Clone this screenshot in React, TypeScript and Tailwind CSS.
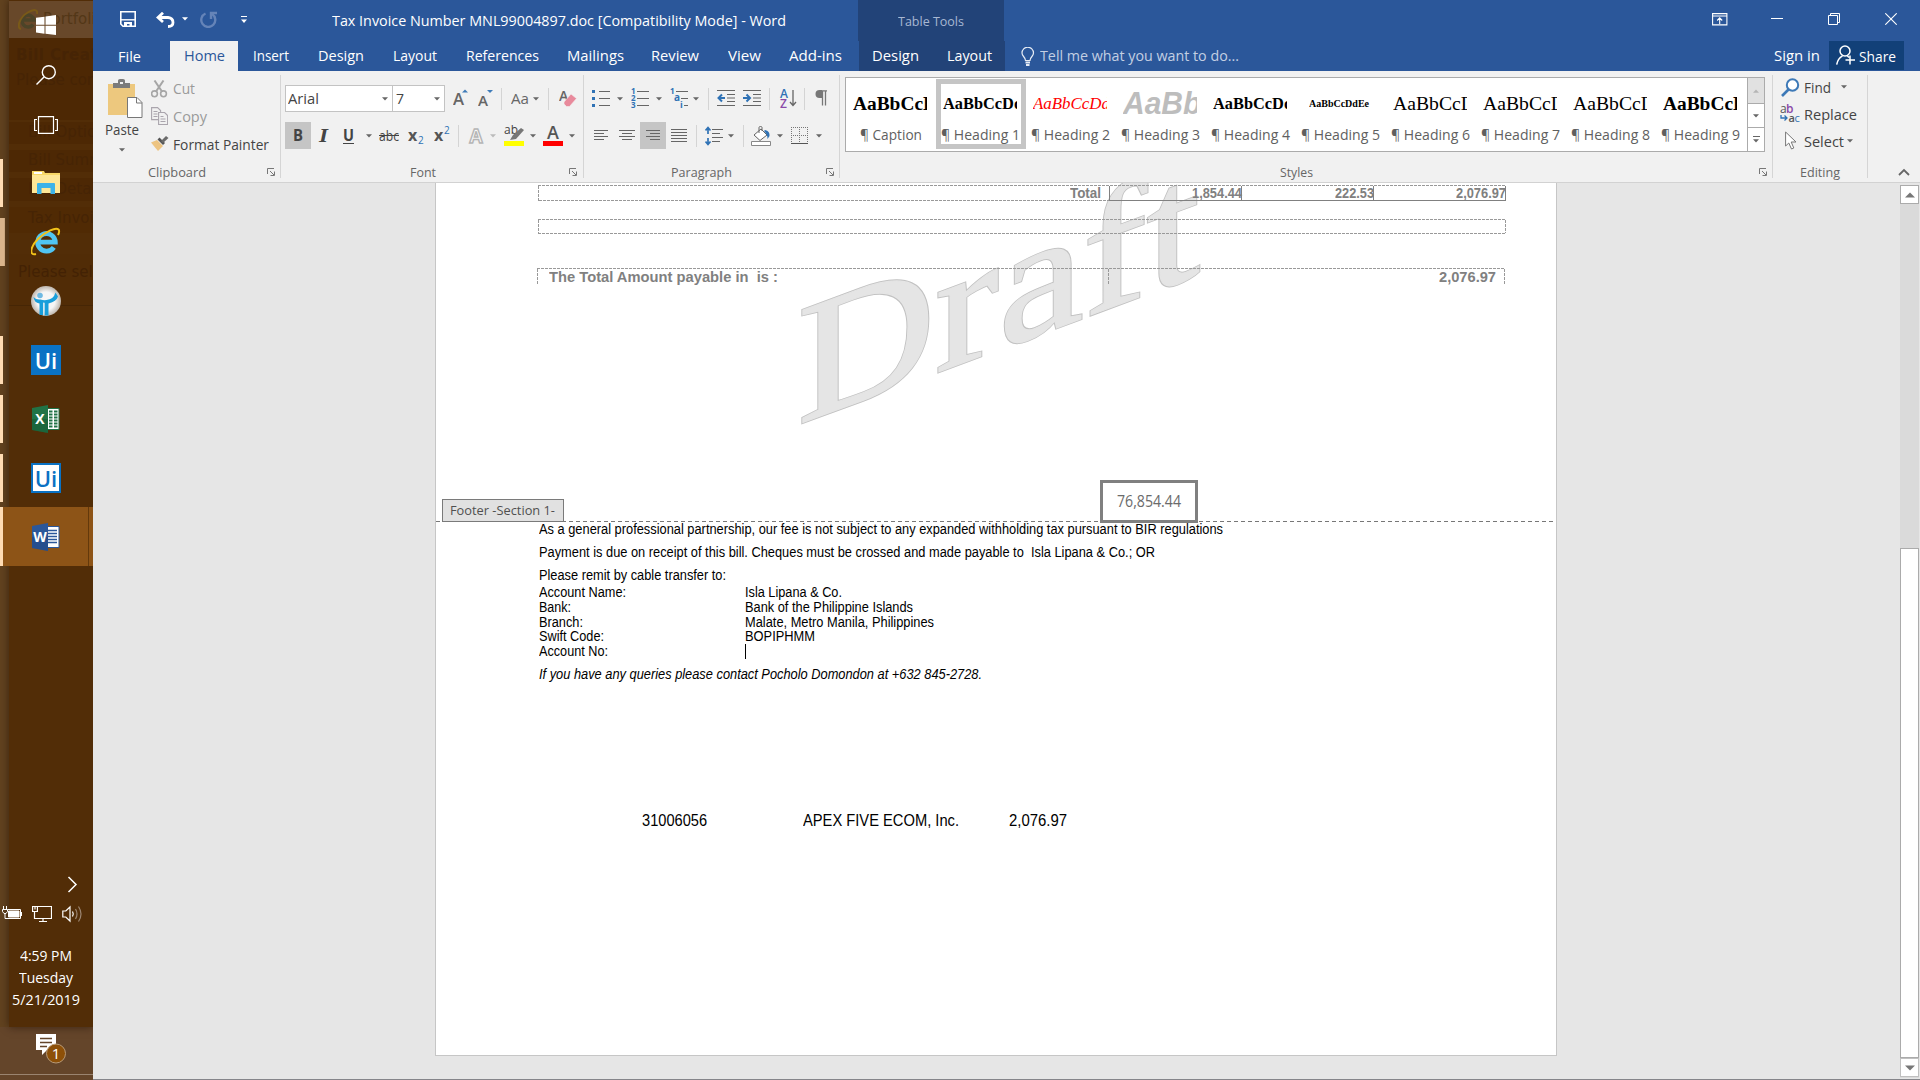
import { useLayoutEffect, useRef } from "react";
import type { ReactNode } from "react";

/* Text squeezed or stretched horizontally to an exact advance width. */
function Fit({ w, className = "", inner = "", children }: { w: number; className?: string; inner?: string; children: ReactNode }) {
  const ref = useRef<HTMLSpanElement>(null);
  useLayoutEffect(() => {
    const el = ref.current;
    if (!el) return;
    el.style.transform = "none";
    el.style.transform = `scaleX(${w / el.getBoundingClientRect().width})`;
  }, [w, children]);
  return (
    <span className={"block shrink-0 " + className} style={{ width: w }}>
      <span ref={ref} className={"inline-block origin-left whitespace-pre " + inner}>
        {children}
      </span>
    </span>
  );
}

const Caret = ({ className = "", color = "#666" }: { className?: string; color?: string }) => (
  <svg width="6" height="4" className={"shrink-0 " + className}>
    <path d="M0 .3h6L3 3.5z" fill={color} />
  </svg>
);

const Sep = ({ className = "" }: { className?: string }) => <div className={"h-[22px] w-px shrink-0 bg-[#d4d4d4] " + className} />;

const Launcher = ({ className = "" }: { className?: string }) => (
  <svg width="8" height="8" className={"shrink-0 " + className} fill="none" stroke="#777">
    <path d="M.5 6V.5H7M3 3l4 4M7.5 3.5v4h-4" />
  </svg>
);

/* ---------- Taskbar ---------- */

const Ui = ({ invert = false }: { invert?: boolean }) => (
  <div
    className={
      invert
        ? "flex h-[30px] w-[30px] items-center justify-center border-2 border-[#0a72c4] bg-white text-[#0a72c4]"
        : "flex h-[30px] w-[30px] items-center justify-center bg-[#0a72c4] text-white"
    }
  >
    <span className="text-[22px] leading-[28px] font-semibold">Ui</span>
  </div>
);

function OfficeIcon({ letter, color, dark }: { letter: string; color: string; dark: string }) {
  return (
    <svg width="28" height="28" viewBox="0 0 28 28">
      <path d="M15 3.5h12v21H15z" fill="#fff" stroke={color} />
      {letter === "X" ? (
        <path d="M17 6.500h3.500M22 6.500h3.500M17 9.500h3.500M22 9.500h3.500M17 12.500h3.500M22 12.500h3.500M17 15.500h3.500M22 15.500h3.500M17 18.500h3.500M22 18.500h3.500M17 21.500h3.500M22 21.500h3.500" stroke={color} strokeWidth="2" />
      ) : (
        <path d="M16 7.500h9M16 10.500h9M16 13.500h9M16 16.500h9M16 19.500h9" stroke={color} strokeWidth="1.500" />
      )}
      <path d="M0 3 16 0v28L0 25z" fill={color} />
      <path d="M0 14h16v14L0 25z" fill={dark} opacity=".3" />
      <text x="8" y="19" textAnchor="middle" fontSize="14" fontWeight="700" fill="#fff" fontFamily="Open Sans">
        {letter}
      </text>
    </svg>
  );
}

const Slot = ({ children, bar = true, active = false }: { children: ReactNode; bar?: boolean; active?: boolean }) => (
  <div className={active ? "relative flex h-[59px] items-center bg-[#8d5417]" : "relative flex h-[59px] items-center"}>
    <div className={active ? "h-full w-[3px] bg-[#ffdcb4]" : bar ? "h-12 w-[3px] bg-[#ffdcb4]" : "h-12 w-[3px]"} />
    <div className="ml-[28px] flex w-[30px] justify-center">{children}</div>
    {active && <div className="ml-[27px] h-full w-px bg-[#63390b]" />}
  </div>
);

/* Window showing dimly through the translucent taskbar. */
function Ghost() {
  return (
    <div className="absolute top-0 left-[9px] h-[1027px] w-[84px] overflow-hidden bg-[#522d07] font-['DejaVu_Sans',sans-serif] text-[15px] whitespace-nowrap text-[#462405] shadow-[0_0_8px_rgba(30,12,0,0.6)]">
      <div className="mt-px flex h-[37px] items-center bg-[#68482a] text-[#533717]">
        <svg width="20" height="22" className="ml-[9px] shrink-0" fill="none">
          <path d="M15 15.500A6 6 0 1 1 16 11H6" stroke="#4c4428" strokeWidth="3.500" />
          <path d="M3 20C-2 19 2 8 9 4s11-4 10 1" stroke="#7a5a18" strokeWidth="2" />
        </svg>
        <span className="ml-[5px]">Portfolio</span>
      </div>
      <div className="h-[82px] bg-[#4d2804] pl-[7px]">
        <div className="pt-[7px] leading-5 font-bold tracking-wide">Bill Creation</div>
        <div className="pt-[5px] leading-5">Please complete</div>
      </div>
      <div className="mt-[2px] h-[22px] bg-[#4d2804] pl-[19px] leading-[20px]">Bill Options</div>
      <div className="mt-[6px] h-[22px] bg-[#4d2804] pl-[19px] leading-[20px]">Bill Summary</div>
      <div className="mt-[6px] h-[23px] bg-[#4d2804] pl-[19px] leading-[22px]">Bill Details</div>
      <div className="mt-[6px] h-[26px] bg-[#502a04] pl-[19px] leading-[22px]">Tax Invoice</div>
      <div className="mt-[21px] h-[52px] border-b border-[#462605] bg-[#512c06] pl-[9px] leading-[36px] text-[#432204]">Please select</div>
    </div>
  );
}

function Taskbar() {
  return (
    <div className="relative h-full w-[93px] shrink-0 overflow-hidden bg-[#61421f]">
      <div className="absolute inset-x-0 bottom-0 h-[53px] bg-[#64452a]" />
      <Ghost />
      <div className="relative flex h-full flex-col text-white">
        <div className="flex h-[50px] pt-[15px] pl-9">
          <svg width="20" height="20" fill="#fff">
            <path d="M0 2.800 8.500 1.700v8H0zM9.500 1.500 20 0v9.700H9.500zM0 10.700h8.500v8L0 17.500zM9.500 10.700H20V20L9.500 18.700z" />
          </svg>
        </div>
        <div className="flex h-[50px] pt-[15px] pl-9">
          <svg width="20" height="20" fill="none" stroke="#fff" strokeWidth="1.400">
            <circle cx="12.800" cy="7.200" r="6.500" />
            <path d="M8 12 .5 19.500" />
          </svg>
        </div>
        <div className="flex h-[53px] pt-[16px] pl-[34px]">
          <svg width="24" height="18" fill="none" stroke="#fff" strokeWidth="1.200">
            <path d="M4.500.6h15v16.800h-15zM3 3.500H.6v11H3M21 3.500h2.400v11H21" />
          </svg>
        </div>
        <Slot>
          <svg width="28" height="23">
            <path d="M0 0h12l1 2h15v20H0z" fill="#f8d867" />
            <path d="M2 1h8v2H2z" fill="#fff" />
            <path d="M0 4h28v18H0z" fill="#fee797" />
            <path d="M5 23V13q0-1 1-1h16q1 0 1 1v10h-4.500v-6h-9v6z" fill="#3db3e8" />
          </svg>
        </Slot>
        <div className="relative">
          <div className="absolute top-[6px] left-0 flex h-12 w-[5px]">
            <div className="w-1 bg-[#d9b48c]" />
            <div className="w-px bg-[#c9a680]" />
          </div>
          <Slot bar={false}>
            <svg width="30" height="30" viewBox="0 0 30 30" fill="none">
              <path d="M22.800 20.300A8.800 8.800 0 1 1 24.300 15.200H8" stroke="#50c4f2" strokeWidth="4.800" />
              <path d="M5 27C-2 29-1 20 7 12 15 4 25 0 27.500 2.500 28.500 3.500 28 6 27 8" stroke="#f2c21a" strokeWidth="2" />
            </svg>
          </Slot>
        </div>
        <Slot bar={false}>
          <svg width="30" height="30" viewBox="0 0 30 30">
            <defs>
              <radialGradient id="ball">
                <stop offset=".6" stopColor="#f6f6f6" />
                <stop offset="1" stopColor="#bdb5ac" />
              </radialGradient>
            </defs>
            <circle cx="15" cy="15" r="15" fill="url(#ball)" />
            <path d="M2.500 11q2.500 3 7 2.500 3 1 6 .5 7-.5 9-7.500l2.500 4q-1.500 5-9.500 7v12h-4V17h-1v12h-4V17.500Q3 16.500 2.500 11z" fill="#1a9fdb" />
            <path d="M12.800 16.500v13" stroke="#f6f6f6" />
            <circle cx="9" cy="9.500" r="2.800" fill="#6fb9e2" />
          </svg>
        </Slot>
        <Slot>
          <Ui />
        </Slot>
        <Slot>
          <OfficeIcon letter="X" color="#217346" dark="#0c4a28" />
        </Slot>
        <Slot>
          <Ui invert />
        </Slot>
        <Slot active>
          <OfficeIcon letter="W" color="#2b579a" dark="#1b3d75" />
        </Slot>

        <div className="mt-auto flex h-[29px] pl-[67px]">
          <svg width="12" height="17" fill="none" stroke="#fff" strokeWidth="1.500">
            <path d="m1.500 1 7.500 7.500L1.500 16" />
          </svg>
        </div>
        <div className="flex h-[39px] items-start pl-[2px]">
          <svg width="20" height="16" className="shrink-0" fill="none" stroke="#fff">
            <path d="M5.500 4.500h13v9h-13M19.500 7v4M1.500 1v3M4.500 1v3M.5 4.500h5v2l-1.500 2h-2L.5 6.500zM3 8v5.500h3" />
            <path d="M6.500 6h10.500v6H6.500z" fill="#fff" />
          </svg>
          <svg width="20" height="18" className="ml-[10px] shrink-0" fill="none" stroke="#fff" strokeWidth="1.200">
            <path d="M6 1.500h13.500v12H2.500V7M.6 1.500h4.800v5H.6zM3 1.500v3M11 13.500v3M7 16.500h8" />
          </svg>
          <svg width="21" height="18" className="ml-[10px] shrink-0" fill="none" stroke="#fff" strokeWidth="1.200">
            <path d="M.8 6h3L8 2v14l-4.200-4h-3zM10.500 6.500q1.500 2.500 0 5" />
            <path d="M13.500 4q3 5 0 10M16.500 1.500q5 7.500 0 15" stroke="#9c8672" />
          </svg>
        </div>
        <div className="flex h-[90px] flex-col items-center pr-[1px] text-[15px] leading-[22px]">
          <Fit w={52}>4:59 PM</Fit>
          <Fit w={54}>Tuesday</Fit>
          <Fit w={68}>5/21/2019</Fit>
        </div>
        <div className="flex h-[46px] pl-9">
          <svg width="32" height="32">
            <path d="M0 0h20v16h-9l-5 5v-5H0z" fill="#fff" />
            <path d="M4 4.500h12M4 8.500h12M4 12.500h7" stroke="#64452a" strokeWidth="1.500" />
            <circle cx="20" cy="19.500" r="9.500" fill="#8d5008" stroke="#b89a77" />
            <text x="20" y="25" textAnchor="middle" fontSize="15" fill="#fff" fontFamily="Open Sans">
              1
            </text>
          </svg>
        </div>
      </div>
      <div className="absolute inset-x-0 bottom-[5px] h-px bg-[#9a8470]" />
    </div>
  );
}

/* ---------- Title bar and tabs ---------- */

function TitleBar() {
  return (
    <div className="flex h-[41px] items-start text-[15px] leading-5 text-white">
      <svg width="16" height="16" className="mt-[11px] ml-[27px] shrink-0" fill="none" stroke="#fff" strokeWidth="1.600">
        <path d="M.8.8h14.400v14.400H3L.8 13z" />
        <path d="M1 8.800h14" strokeWidth="1.400" />
        <path d="M4 11h8v4.500H9.500V13H7v2.500H4z" fill="#fff" strokeWidth="0" />
      </svg>
      <svg width="19" height="16" className="mt-[12px] ml-[20px] shrink-0" fill="none" stroke="#fff" strokeWidth="2.800">
        <path d="M2 5.500h10q5 .5 5 5 0 4-5 4" />
        <path d="M7 .8 2 5.500 7 10" />
      </svg>
      <Caret className="mt-[17px] ml-[7px]" color="#fff" />
      <svg width="18" height="17" className="mt-[11px] ml-[12px] shrink-0" fill="none" stroke="#6584b8" strokeWidth="2.400">
        <path d="M5.500 2.500A7 7 0 1 0 12 3" />
        <path d="M17 2h-6v6" />
      </svg>
      <svg width="6" height="8" className="mt-[16px] ml-[23px] shrink-0">
        <path d="M0 .5h6" stroke="#fff" />
        <path d="M0 3.500h6L3 7z" fill="#fff" />
      </svg>
      <Fit w={454} className="mt-[10px] ml-[85px]">
        Tax Invoice Number MNL99004897.doc [Compatibility Mode] - Word
      </Fit>
      <div className="ml-[72px] flex h-[41px] w-[146px] bg-[#224378]">
        <Fit w={66} className="mt-[11px] ml-[40px] text-[13.500px] text-[#a8b8d3]">
          Table Tools
        </Fit>
      </div>
      <svg width="16" height="13" className="mt-[13px] ml-auto shrink-0" fill="none" stroke="#fff" strokeWidth="1.100">
        <path d="M.6.6h14.300v11.300H.6zM1 3h14M7.700 11V5M5.200 7.500l2.500-2.600 2.500 2.600" />
      </svg>
      <svg width="12" height="12" className="mt-[13px] ml-[43px] shrink-0" stroke="#fff">
        <path d="M0 5.500h12" />
      </svg>
      <svg width="12" height="12" className="mt-[13px] ml-[45px] shrink-0" fill="none" stroke="#fff">
        <path d="M.5 2.500h9v9h-9zM2.500 2V.5h9v9H10" />
      </svg>
      <svg width="12" height="12" className="mt-[13px] mr-[23px] ml-[45px] shrink-0" stroke="#fff" strokeWidth="1.100">
        <path d="m.3.300 11.400 11.400M11.700.3.300 11.700" />
      </svg>
    </div>
  );
}

function Tabs() {
  return (
    <div className="flex h-[30px] items-start text-[15px] leading-5 text-white">
      <Fit w={23} className="mt-[5px] ml-[25px]">File</Fit>
      <div className="ml-[29px] flex h-[30px] w-[68px] justify-center bg-[#f1f1f1] text-[#2b579a]">
        <Fit w={41} className="mt-[4px]">Home</Fit>
      </div>
      <Fit w={36} className="mt-[4px] ml-[15px]">Insert</Fit>
      <Fit w={46} className="mt-[4px] ml-[29px]">Design</Fit>
      <Fit w={44} className="mt-[4px] ml-[29px]">Layout</Fit>
      <Fit w={73} className="mt-[4px] ml-[29px]">References</Fit>
      <Fit w={57} className="mt-[4px] ml-[28px]">Mailings</Fit>
      <Fit w={48} className="mt-[4px] ml-[27px]">Review</Fit>
      <Fit w={33} className="mt-[4px] ml-[29px]">View</Fit>
      <Fit w={53} className="mt-[4px] ml-[28px]">Add-ins</Fit>
      <div className="ml-[17px] flex h-[30px] w-[146px] bg-[#224378]">
        <Fit w={47} className="mt-[4px] ml-[13px]">Design</Fit>
        <Fit w={45} className="mt-[4px] ml-[28px]">Layout</Fit>
      </div>
      <svg width="14" height="20" className="mt-[6px] ml-[16px] shrink-0" fill="none" stroke="#e6ecf5" strokeWidth="1.200">
        <path d="M4.500 13.500C4.500 10 1 9.500 1 6a5.600 5.600 0 0 1 11.500 0c0 3.500-3.500 4-3.500 7.500z" />
        <path d="M4.500 15.500H9M5 18h3.500" strokeWidth="2" />
      </svg>
      <Fit w={199} className="mt-[4px] ml-[5px] text-[#c3cfe3]">Tell me what you want to do...</Fit>
      <Fit w={46} className="mt-[4px] ml-auto">Sign in</Fit>
      <div className="mr-4 ml-[9px] flex h-[29px] w-[75px] bg-[#124078]">
        <svg width="20" height="21" className="mt-[4px] ml-[7px] shrink-0" fill="none" stroke="#fff" strokeWidth="1.500">
          <circle cx="9" cy="6" r="5" />
          <path d="M.7 19.500C1.500 15 3.500 12.500 6.500 10.800M11 10.500l2 2M14 10.500v9M9.500 15h9.500" />
        </svg>
        <Fit w={37} className="mt-[5px] ml-[3px]">Share</Fit>
      </div>
    </div>
  );
}

/* ---------- Ribbon groups ---------- */

const Group = ({ className, children }: { className: string; children: ReactNode }) => (
  <div className={"relative flex h-full shrink-0 flex-col " + className}>
    {children}
    <div className="absolute top-1 right-0 h-[103px] w-px bg-[#d5d5d5]" />
  </div>
);

function Clipboard() {
  return (
    <Group className="w-[188px]">
      <div className="flex h-[91px]">
        <div className="ml-[12px] w-[38px]">
          <svg width="36" height="39" className="mt-[8px] ml-[3px]">
            <path d="M0 5h27v31H0z" fill="#edc87e" />
            <path d="M5 4h5V1.500Q10 0 12 0h3q2 0 2 1.500V4h5v5H5z" fill="#7b7b7b" />
            <path d="M12 3h3v2h-3z" fill="#f1f1f1" />
            <path d="M19.500 18.500h9.500l5 5v15H19.500z" fill="#fff" stroke="#777" />
            <path d="M28.500 18.500v5.500H34" fill="none" stroke="#777" />
          </svg>
          <Fit w={34} className="mt-[2px] text-[15px] leading-[18px] text-[#444]">Paste</Fit>
          <Caret className="mt-[10px] ml-[14px]" />
        </div>
        <div className="ml-[8px] pt-[7px] text-[15px] leading-[20px] text-[#9a9a9a]">
          <div className="flex h-[28px]">
            <svg width="17" height="18" className="mt-[2px]" fill="none" stroke="#a6a6a6" strokeWidth="1.600">
              <circle cx="3.500" cy="13.800" r="2.900" />
              <circle cx="12.500" cy="13.800" r="2.900" />
              <path d="m3.500.5 7.500 11M12.500.5 5 11.500" strokeWidth="2" />
            </svg>
            <Fit w={22} className="ml-[5px]">Cut</Fit>
          </div>
          <div className="flex h-[28px]">
            <svg width="17" height="18" className="mt-[1px]" fill="#f1f1f1" stroke="#aaa5ad" strokeWidth="1.100">
              <path d="M.6.6h6l3 3v9h-9z" />
              <path d="M7.600 5.500h6l3 3v9h-9z" />
              <path d="M2.500 4.500h4M2.500 7h4M2.500 9.500h4M9.500 9.500h3M9.500 12h5M9.500 14.500h5" />
            </svg>
            <Fit w={34} className="ml-[5px]">Copy</Fit>
          </div>
          <div className="flex h-[28px] text-[#444]">
            <svg width="18" height="16" className="mt-[1px]">
              <path d="M0 7.500 6 5l6 6-5 5z" fill="#edc481" />
              <path d="m6.500 4.500 2-2L14 8l-2 2z" fill="#555" />
              <path d="m10 6 5-5 2.500 2L12 8z" fill="#6b6b6b" />
            </svg>
            <Fit w={96} className="ml-[4px]">Format Painter</Fit>
          </div>
        </div>
      </div>
      <div className="flex items-center text-[13.500px] leading-5 text-[#666]">
        <Fit w={58} className="ml-[55px]">Clipboard</Fit>
        <Launcher className="ml-[61px]" />
      </div>
    </Group>
  );
}

function GrowA({ up }: { up: boolean }) {
  return (
    <svg width="15" height="20" className={up ? "ml-[8px] shrink-0" : "ml-[10px] shrink-0"}>
      <text x="0" y={up ? 16 : 17} fontSize={up ? 16 : 15} fontWeight="600" fill="#666" fontFamily="Open Sans" textLength={up ? 11 : 10} lengthAdjust="spacingAndGlyphs">
        A
      </text>
      <path d={up ? "M9 3.500h6l-3-3z" : "M9 1h6l-3 3z"} fill="#3f7cb9" />
    </svg>
  );
}

function FontGroup() {
  return (
    <Group className="w-[303px]">
      <div className="mt-[14px] flex h-[27px] items-center text-[15px] leading-5 text-[#444]">
        <div className="ml-[4px] flex h-[27px] w-[108px] shrink-0 items-center border border-[#c3c3c3] bg-white">
          <Fit w={31} className="mb-px ml-[2px]">Arial</Fit>
          <Caret className="ml-[63px]" />
        </div>
        <div className="-ml-px flex h-[27px] w-[53px] shrink-0 items-center border border-[#c3c3c3] bg-white">
          <Fit w={8} className="mb-px ml-[3px]">7</Fit>
          <Caret className="ml-[30px]" />
        </div>
        <GrowA up />
        <GrowA up={false} />
        <Sep className="ml-[8px]" />
        <Fit w={18} className="mb-[2px] ml-[9px] text-[#666]">Aa</Fit>
        <Caret className="ml-[4px]" />
        <Sep className="ml-[9px]" />
        <svg width="18" height="20" className="ml-[10px] shrink-0">
          <text x="0" y="11.500" fontSize="14" fontWeight="600" fill="#666" fontFamily="Open Sans">A</text>
          <path d="m5 13 7-8 5.500 4.500-7 8H7.500L5 15z" fill="#e88a9c" stroke="#f1f1f1" strokeWidth=".6" />
        </svg>
      </div>
      <div className="mt-[10px] flex h-[27px] items-center text-[#444]">
        <div className="ml-[4px] flex h-[27px] w-[26px] shrink-0 items-center justify-center bg-[#c5c5c5]">
          <Fit w={10} className="mb-px text-[16.500px] leading-5 font-bold">B</Fit>
        </div>
        <Fit w={9} className="ml-[8px] font-['Liberation_Serif',serif] text-[19px] leading-5 font-bold italic">I</Fit>
        <Fit w={11} className="mb-px ml-[15px] text-[16px] leading-5 font-bold" inner="underline underline-offset-2">U</Fit>
        <Caret className="ml-[12px]" />
        <Fit w={20} className="ml-[7px] text-[14px] leading-5" inner="line-through">abc</Fit>
        <svg width="16" height="22" className="ml-[9px] shrink-0" fontFamily="Open Sans" fill="#555">
          <text x="0" y="16" fontSize="16" fontWeight="700">x</text>
          <text x="10" y="19" fontSize="10" fill="#2f72b5">2</text>
        </svg>
        <svg width="16" height="22" className="ml-[10px] shrink-0" fontFamily="Open Sans" fill="#555">
          <text x="0" y="16" fontSize="16" fontWeight="700">x</text>
          <text x="10" y="9" fontSize="10" fill="#2f72b5">2</text>
        </svg>
        <Sep className="ml-[8px]" />
        <svg width="16" height="22" className="ml-[9px] shrink-0" fontFamily="Open Sans">
          <text x="1.500" y="17.500" fontSize="19" fontWeight="700" fill="#f8f8f8" stroke="#b5b5b5" strokeWidth="1.400">A</text>
        </svg>
        <Caret className="ml-[6px]" color="#bbb" />
        <svg width="21" height="22" className="ml-[8px] shrink-0">
          <text x="0" y="9" fontSize="13" fill="#444" fontFamily="Open Sans" textLength="14" lengthAdjust="spacingAndGlyphs">ab</text>
          <path d="m6 15 3-5 8-7 3 2-8 9z" fill="#777" />
          <path d="M0 16h20v5H0z" fill="#ff0" />
        </svg>
        <Caret className="ml-[5px]" />
        <svg width="20" height="22" className="ml-[7px] shrink-0">
          <text x="4" y="14" fontSize="18" fontWeight="600" fill="#555" fontFamily="Open Sans">A</text>
          <path d="M0 16h20v5H0z" fill="red" />
        </svg>
        <Caret className="ml-[6px]" />
      </div>
      <div className="mt-[13px] flex items-center text-[13.500px] leading-5 text-[#666]">
        <Fit w={26} className="ml-[129px]">Font</Fit>
        <Launcher className="ml-[133px]" />
      </div>
    </Group>
  );
}

const Lines = ({ d, w, className = "" }: { d: string; w: number; className?: string }) => (
  <svg width={w} height="18" className={"shrink-0 " + className} stroke="#666" strokeWidth="1.100">
    <path d={d} />
  </svg>
);

function ParagraphGroup() {
  return (
    <Group className="w-[256px]">
      <div className="mt-[14px] flex h-[27px] items-center">
        <svg width="18" height="18" className="mb-px ml-[8px] shrink-0">
          <path d="M7 2.500h11M7 9.500h11M7 16.500h11" stroke="#666" />
          <path d="M0 1h3v3H0zM0 8h3v3H0zM0 15h3v3H0z" fill="#2f72b5" />
        </svg>
        <Caret className="ml-[7px]" />
        <svg width="18" height="20" className="mb-[2px] ml-[8px] shrink-0" fill="#2f72b5" fontSize="8" fontFamily="Open Sans" fontWeight="700">
          <path d="M6 3.500h12M6 10.500h12M6 17.500h12" stroke="#666" />
          <text x="0" y="6">1</text>
          <text x="0" y="13">2</text>
          <text x="0" y="20">3</text>
        </svg>
        <Caret className="ml-[7px]" />
        <svg width="19" height="20" className="mb-[2px] ml-[8px] shrink-0" fill="#2f72b5" fontSize="8" fontFamily="Open Sans" fontWeight="700">
          <path d="M6 3.500h12M11 10.500h7M14 17.500h4" stroke="#666" />
          <text x="0" y="6">1</text>
          <text x="4" y="13" fontSize="10">a</text>
          <text x="10" y="20" fontSize="9">i</text>
        </svg>
        <Caret className="ml-[4px]" />
        <Sep className="ml-[9px]" />
        <svg width="18" height="18" className="mb-px ml-[8px] shrink-0" fill="none">
          <path d="M0 1.500h18M10 5.500h8M10 9h8M10 12.500h8M0 16.500h18" stroke="#666" />
          <path d="M8 9H2M5 5.500 1.500 9 5 12.500" stroke="#2f72b5" strokeWidth="2" />
        </svg>
        <svg width="18" height="18" className="mb-px ml-[8px] shrink-0" fill="none">
          <path d="M0 1.500h18M10 5.500h8M10 9h8M10 12.500h8M0 16.500h18" stroke="#666" />
          <path d="M0 9h6M3.500 5.500 7 9l-3.500 3.500" stroke="#2f72b5" strokeWidth="2" />
        </svg>
        <Sep className="ml-[8px]" />
        <svg width="18" height="22" className="mb-px ml-[9px] shrink-0" fontFamily="Open Sans" fontWeight="600" fontSize="12">
          <text x="1" y="11" fill="#2f72b5">A</text>
          <text x="1" y="20.500" fill="#8a4aa8">Z</text>
          <path d="M14 3v15M11 15l3 3.500 3-3.500" fill="none" stroke="#666" strokeWidth="1.300" />
        </svg>
        <Sep className="ml-[7px]" />
        <svg width="13" height="16" className="mb-px ml-[10px] shrink-0" fill="none" stroke="#777" strokeWidth="1.300">
          <path d="M12 .8H6M7.500 1v14.500M10.500 1v14.500" />
          <path d="M7 0v8H4.500a4 4 0 0 1 0-8z" fill="#777" strokeWidth="0" />
        </svg>
      </div>
      <div className="mt-[10px] flex h-[27px] items-center">
        <Lines w={14} className="ml-[10px]" d="M0 3.500h14M0 6.500h10M0 9.500h14M0 12.500h10" />
        <Lines w={16} className="ml-[11px]" d="M0 3.500h16M3 6.500h10M0 9.500h16M3 12.500h10" />
        <div className="ml-[5px] flex h-[27px] w-[26px] shrink-0 items-center justify-center bg-[#c5c5c5]">
          <Lines w={14} d="M0 3.500h14M4 6.500h10M0 9.500h14M4 12.500h10" />
        </div>
        <Lines w={16} className="ml-[5px]" d="M0 2.500h16M0 5.500h16M0 8.500h16M0 11.500h16M0 14.500h16" />
        <Sep className="ml-[9px]" />
        <svg width="18" height="20" className="ml-[8px] shrink-0" fill="none">
          <path d="M7 3.500h11M7 7.500h8M7 11.500h11M7 15.500h8" stroke="#666" />
          <path d="M3 2v6M3 12v6M.5 4.500 3 1.500l2.500 3M.5 15.500l2.500 3 2.500-3" stroke="#2f72b5" strokeWidth="1.700" />
        </svg>
        <Caret className="ml-[5px]" />
        <Sep className="ml-[9px]" />
        <svg width="20" height="20" className="ml-[7px] shrink-0" fill="none" stroke="#666">
          <path d="m3 9 7-6 6 6-7 5.500z" fill="#fff" />
          <path d="M8 7V1.500Q8 .5 9.500.5T11 1.500V5" />
          <path d="M14 4q5 1 4.500 6l-2 3q0-5-3.500-8z" fill="#2f72b5" strokeWidth="0" />
          <path d="M.5 15.500h19v4H.5z" fill="#fff" stroke="#888" />
        </svg>
        <Caret className="ml-[6px]" />
        <svg width="17" height="17" className="ml-[8px] shrink-0" fill="none" stroke="#777">
          <path d="M.5 0v16M16.500 0v16M8.500 0v16M0 .5h17M0 8.500h17" strokeDasharray="1 1" />
          <path d="M0 16.500h17" stroke="#555" />
        </svg>
        <Caret className="ml-[8px]" />
      </div>
      <div className="mt-[13px] flex items-center text-[13.500px] leading-5 text-[#666]">
        <Fit w={61} className="ml-[87px]">Paragraph</Fit>
        <Launcher className="ml-[94px]" />
      </div>
    </Group>
  );
}

const styleItems = [
  { name: "Caption", w: 62, cls: "font-['Liberation_Serif',serif] text-[18px] font-bold text-black", text: "AaBbCcD", tw: 84 },
  { name: "Heading 1", w: 79, cls: "font-['Liberation_Serif',serif] text-[16.500px] font-bold text-black", text: "AaBbCcDd", tw: 80 },
  { name: "Heading 2", w: 79, cls: "font-['Liberation_Serif',serif] text-[17px] italic text-[#ff0000]", text: "AaBbCcDd", tw: 77 },
  { name: "Heading 3", w: 79, cls: "font-['Liberation_Sans',sans-serif] text-[31px] font-bold italic text-[#bdbdbd]", text: "AaBbC", tw: 100 },
  { name: "Heading 4", w: 79, cls: "font-['Liberation_Serif',serif] text-[16.500px] font-bold text-black", text: "AaBbCcDd", tw: 80 },
  { name: "Heading 5", w: 79, cls: "font-['Liberation_Serif',serif] text-[10.500px] font-bold text-black", text: "AaBbCcDdEe", tw: 60 },
  { name: "Heading 6", w: 79, cls: "font-['Liberation_Serif',serif] text-[19.500px] text-black", text: "AaBbCcD", tw: 82 },
  { name: "Heading 7", w: 79, cls: "font-['Liberation_Serif',serif] text-[19.500px] text-black", text: "AaBbCcD", tw: 82 },
  { name: "Heading 8", w: 79, cls: "font-['Liberation_Serif',serif] text-[19.500px] text-black", text: "AaBbCcD", tw: 82 },
  { name: "Heading 9", w: 79, cls: "font-['Liberation_Serif',serif] text-[18px] font-bold text-black", text: "AaBbCcD", tw: 84 },
];

function StylesGroup() {
  return (
    <Group className="w-[933px]">
      <div className="mt-[6px] ml-[5px] flex h-[75px] w-[920px] border border-[#ababab] bg-white">
        {styleItems.map((s, i) => (
          <div key={s.name} className="relative flex h-[73px] w-[90px] shrink-0 flex-col items-center">
            {i === 1 && <div className="absolute inset-x-0 top-px h-[70px] border-[5px] border-[#c5c5c5]" />}
            <div className={i === 5 ? "relative mt-[13px] mr-[2px] flex h-[26px] w-[62px] items-center overflow-hidden" : "relative mt-[13px] mr-[2px] flex h-[26px] w-[74px] items-center overflow-hidden"}>
              <Fit w={s.tw} className={"leading-[26px] " + s.cls}>{s.text}</Fit>
            </div>
            <div className="mt-[8px] mr-px flex justify-center text-[14.500px] leading-5 text-[#5f5f5f]">
              <Fit w={s.w}>{"¶ " + s.name}</Fit>
            </div>
          </div>
        ))}
        <div className="ml-auto flex w-[17px] flex-col border-l border-[#ababab]">
          <div className="flex h-[25px] items-center justify-center bg-[#e1e1e1]">
            <Caret className="rotate-180" color="#b5b5b5" />
          </div>
          <div className="flex h-[24px] items-center justify-center border-t border-[#ababab]">
            <Caret />
          </div>
          <div className="flex h-[24px] flex-col items-center justify-center gap-[2px] border-t border-[#ababab]">
            <div className="h-px w-[7px] bg-[#666]" />
            <Caret />
          </div>
        </div>
      </div>
      <div className="mt-[10px] flex items-center text-[13.500px] leading-5 text-[#666]">
        <Fit w={33} className="ml-[440px]">Styles</Fit>
        <Launcher className="ml-[446px]" />
      </div>
    </Group>
  );
}

function EditingGroup() {
  return (
    <Group className="w-[95px]">
      <div className="h-[91px] pt-[6px] pl-[7px] text-[15px] leading-5 text-[#444]">
        <div className="flex h-[27px]">
          <svg width="19" height="19" className="mt-px ml-[1px]" fill="none" stroke="#3d79b7">
            <circle cx="11.500" cy="7" r="5.700" strokeWidth="2" fill="#fff" />
            <path d="m7.500 11.500-6.500 6.500" strokeWidth="2.600" />
          </svg>
          <Fit w={27} className="ml-[4px]">Find</Fit>
          <Caret className="mt-[8px] ml-[10px]" />
        </div>
        <div className="flex h-[27px]">
          <svg width="20" height="20" fontFamily="Open Sans" fontSize="12">
            <text x="0" y="9" fill="#555">a</text>
            <text x="6" y="9" fill="#8a4aa8" fontWeight="600">b</text>
            <text x="8.500" y="18" fill="#555" fontWeight="600" fontSize="11">a</text>
            <text x="14.500" y="18" fill="#2f72b5" fontSize="11">c</text>
            <path d="M1 11v3h5.500M4.500 11.500l2.500 2.500-2.500 2.500" fill="none" stroke="#2f72b5" strokeWidth="1.300" />
          </svg>
          <Fit w={53} className="ml-[4px]">Replace</Fit>
        </div>
        <div className="flex h-[27px]">
          <svg width="12" height="20" className="ml-[5px]" fill="#fff" stroke="#777">
            <path d="M.6 1v14l3.200-3 2.700 6 2.300-1-2.600-6H11z" />
          </svg>
          <Fit w={40} className="ml-[7px]">Select</Fit>
          <Caret className="mt-[8px] ml-[3px]" />
        </div>
      </div>
      <Fit w={40} className="ml-[27px] text-[13.500px] leading-5 text-[#666]">Editing</Fit>
    </Group>
  );
}

/* ---------- Document ---------- */

const DashH = () => <div className="h-px w-full bg-[repeating-linear-gradient(90deg,#999_0_3px,transparent_3px_4px)]" />;
const DashV = ({ className = "" }: { className?: string }) => (
  <div className={"w-px shrink-0 bg-[repeating-linear-gradient(180deg,#999_0_3px,transparent_3px_4px)] " + className} />
);

const Cell = ({ w, text }: { w: number; text: string }) => (
  <div className="flex h-[15px] w-[132px] justify-end border-r border-b border-[#808080]">
    <Fit w={w} className="-mr-px">{text}</Fit>
  </div>
);

function Page() {
  return (
    <div className="relative ml-[342px] h-[873px] w-[1122px] overflow-hidden border-x border-b border-[#c6c6c6] bg-white font-['Liberation_Sans',sans-serif]">
      <svg width="1120" height="340" className="absolute top-0 left-0">
        <g transform="matrix(1.112 -0.415 0 1 361.500 241.500)" fontFamily="Liberation Serif" fontSize="171.500" style={{ fontVariantLigatures: "none" }}>
          <text fill="#c2c2c2" stroke="#c2c2c2" strokeWidth="3">
            Draft
          </text>
          <text fill="#e5e5e5" stroke="#e5e5e5" strokeWidth="1.200" aria-hidden="true">
            Draft
          </text>
        </g>
      </svg>

      <div className="relative mt-[2px] ml-[102px] w-[968px] text-[14px] leading-[14px] font-bold text-[#808080]">
        <DashH />
        <div className="flex h-[15px]">
          <DashV />
          <div className="flex w-[570px] flex-col">
            <Fit w={31} className="ml-[531px] h-[14px]">Total</Fit>
            <DashH />
          </div>
          <div className="w-px bg-[#808080]" />
          <Cell w={50} text="1,854.44" />
          <Cell w={39} text="222.53" />
          <Cell w={50} text="2,076.97" />
        </div>
      </div>

      <div className="relative mt-[18px] ml-[102px] w-[968px]">
        <DashH />
        <div className="flex h-[13px] justify-between">
          <DashV />
          <DashV />
        </div>
        <DashH />
      </div>

      <div className="relative mt-[34px] ml-[101px] w-[968px] text-[15.500px] leading-[16px] font-bold text-[#808080]">
        <DashH />
        <div className="flex h-[16px]">
          <DashV />
          <Fit w={229} className="ml-[11px]">{"The Total Amount payable in  is :"}</Fit>
          <DashV className="ml-[330px]" />
          <Fit w={57} className="ml-[330px]">2,076.97</Fit>
          <DashV className="ml-auto" />
        </div>
      </div>

      <div className="relative mt-[195px] flex h-[43px] items-end">
        <div className="absolute inset-x-0 bottom-px h-px bg-[repeating-linear-gradient(90deg,#777_0_4px,transparent_4px_7px)]" />
        <div className="relative mb-px ml-[6px] flex h-[23px] w-[122px] items-center border border-[#7a7a7a] bg-[#e1e1e1] pb-px pl-[7px] font-['Open_Sans',sans-serif] text-[13px] leading-5 text-[#505050]">
          <Fit w={105}>Footer -Section 1-</Fit>
        </div>
        <div className="relative ml-[536px] flex h-[43px] w-[98px] items-center border-[3px] border-[#808080] bg-white pl-[14px] font-['Open_Sans',sans-serif] text-[15.500px] text-[#6b6b6b]">
          <Fit w={64}>76,854.44</Fit>
        </div>
      </div>

      <div className="ml-[103px] text-[14px] leading-[15px] text-black">
        <Fit w={684} className="-mt-px h-[23px]">As a general professional partnership, our fee is not subject to any expanded withholding tax pursuant to BIR regulations</Fit>
        <Fit w={616} className="h-[23px]">{"Payment is due on receipt of this bill. Cheques must be crossed and made payable to  Isla Lipana & Co.; OR"}</Fit>
        <Fit w={187} className="h-[17px]">Please remit by cable transfer to:</Fit>
        <div className="flex h-[15px]">
          <Fit w={87}>Account Name:</Fit>
          <Fit w={97} className="ml-[119px]">{"Isla Lipana & Co."}</Fit>
        </div>
        <div className="flex h-[15px]">
          <Fit w={32}>Bank:</Fit>
          <Fit w={168} className="ml-[174px]">Bank of the Philippine Islands</Fit>
        </div>
        <div className="flex h-[14px]">
          <Fit w={44}>Branch:</Fit>
          <Fit w={189} className="ml-[162px]">Malate, Metro Manila, Philippines</Fit>
        </div>
        <div className="flex h-[15px]">
          <Fit w={65}>Swift Code:</Fit>
          <Fit w={70} className="ml-[141px]">BOPIPHMM</Fit>
        </div>
        <div className="flex h-[23px]">
          <Fit w={69}>Account No:</Fit>
          <div className="ml-[137px] h-[15px] w-px bg-black" />
        </div>
        <Fit w={443} className="h-[15px] italic">If you have any queries please contact Pocholo Domondon at +632 845-2728.</Fit>
      </div>

      <div className="mt-[130px] ml-[206px] flex text-[16px] leading-[18px] text-black">
        <Fit w={65}>31006056</Fit>
        <Fit w={156} className="ml-[96px]">APEX FIVE ECOM, Inc.</Fit>
        <Fit w={58} className="ml-[50px]">2,076.97</Fit>
      </div>
    </div>
  );
}

function ScrollBar() {
  return (
    <div className="mt-[2px] mr-[1px] flex h-[893px] w-[19px] flex-col bg-[#dadada]">
      <div className="flex h-[19px] items-center justify-center border border-[#ababab] bg-white">
        <svg width="10" height="6">
          <path d="M0 5.500h10L5 .5z" fill="#777" />
        </svg>
      </div>
      <div className="mt-[344px] h-[510px] border border-[#ababab] bg-white" />
      <div className="flex h-[19px] items-center justify-center border border-[#c0c0c0] bg-white">
        <svg width="10" height="6">
          <path d="M0 .5h10L5 5.500z" fill="#777" />
        </svg>
      </div>
    </div>
  );
}

export default function App() {
  return (
    <div className="flex h-[1080px] w-[1920px] overflow-hidden font-['Open_Sans',sans-serif]">
      <Taskbar />
      <div className="flex w-[1827px] flex-col bg-[#e6e6e6]">
        <div className="bg-[#2b579a]">
          <TitleBar />
          <Tabs />
        </div>
        <div className="flex h-[112px] border-b border-[#d2d2d2] bg-[#f1f1f1]">
          <Clipboard />
          <FontGroup />
          <ParagraphGroup />
          <StylesGroup />
          <EditingGroup />
          <svg width="12" height="8" className="mt-[97px] ml-[30px]" fill="none" stroke="#666" strokeWidth="1.800">
            <path d="m1 7 5-5 5 5" />
          </svg>
        </div>
        <div className="flex h-[896px] justify-between">
          <Page />
          <ScrollBar />
        </div>
        <div className="h-px bg-[#85858a]" />
      </div>
    </div>
  );
}
